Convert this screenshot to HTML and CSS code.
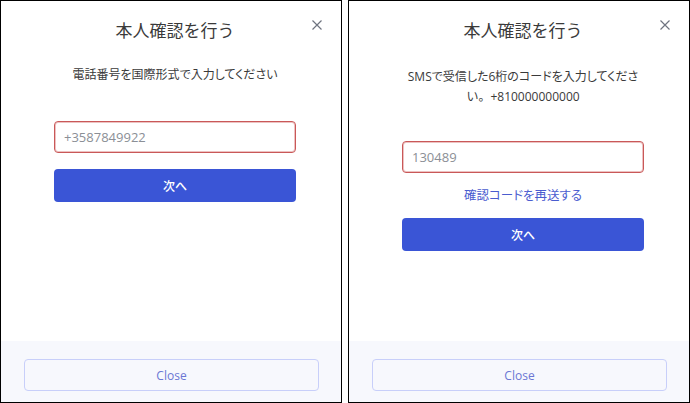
FILE: index.html
```html
<!DOCTYPE html>
<html lang="ja">
<head>
<meta charset="utf-8">
<title>本人確認を行う</title>
<link rel="stylesheet" href="styles.css">
</head>
<body>
<div class="page">
  <section class="panel">
    <div class="panel-body">
      <button class="x-btn" aria-label="close">
        <svg width="10" height="10" viewBox="0 0 10 10"><path d="M0.5 0.5L9.5 9.5M9.5 0.5L0.5 9.5" stroke="#6f7480" stroke-width="1.2" fill="none"/></svg>
      </button>
      <h1 class="title">本人確認を行う</h1>
      <p class="desc desc-one">電話番号を国際形式で入力してください</p>
      <div class="field">+3587849922</div>
      <button class="primary">次へ</button>
    </div>
    <div class="panel-footer">
      <button class="close-btn">Close</button>
    </div>
  </section>
  <section class="panel">
    <div class="panel-body">
      <button class="x-btn" aria-label="close">
        <svg width="10" height="10" viewBox="0 0 10 10"><path d="M0.5 0.5L9.5 9.5M9.5 0.5L0.5 9.5" stroke="#6f7480" stroke-width="1.2" fill="none"/></svg>
      </button>
      <h1 class="title">本人確認を行う</h1>
      <p class="desc desc-two">SMSで受信した6桁のコードを入力してくださ<br><span class="full">い。</span>+810000000000</p>
      <div class="field field-two">130489</div>
      <a class="resend">確認コードを再送する</a>
      <button class="primary primary-two">次へ</button>
    </div>
    <div class="panel-footer">
      <button class="close-btn">Close</button>
    </div>
  </section>
</div>
</body>
</html>
```
FILE: styles.css
```css
* { box-sizing: border-box; }
html, body { margin: 0; padding: 0; background: #fff; }
body {
  font-family: "Open Sans", "Noto Sans CJK JP", sans-serif;
  color: #333;
}
.page {
  display: flex;
  gap: 6px;
  width: 690px;
  height: 403px;
}
.panel {
  width: 342px;
  height: 403px;
  border: 1px solid #000;
  display: flex;
  flex-direction: column;
  background: #fff;
}
.panel-body {
  flex: 1;
  position: relative;
  display: flex;
  flex-direction: column;
  padding: 17px 45px 0 53px;
}
.x-btn {
  position: absolute;
  top: 18px;
  right: 18px;
  width: 12px;
  height: 12px;
  padding: 0;
  border: 0;
  background: none;
  display: flex;
  align-items: center;
  justify-content: center;
}
.title {
  margin: 0;
  font-family: "Noto Sans CJK JP", sans-serif;
  font-weight: 400;
  font-size: 17px;
  line-height: 24px;
  text-align: center;
  color: #3a3a3a;
}
.desc {
  margin: 23px -20px 0;
  font-family: "Open Sans", "Noto Sans CJK JP", sans-serif;
  font-feature-settings: "palt";
  font-size: 12px;
  line-height: 20px;
  text-align: center;
  color: #3a3a3a;
}
.desc .full { font-feature-settings: normal; }
.desc-two { margin-top: 25px; }
.field {
  margin-top: 36px;
  height: 32px;
  border: 1px solid #c95858;
  box-shadow: inset 0 0 0 1px rgba(215, 120, 120, 0.45);
  border-radius: 4px;
  padding: 0 9px;
  display: flex;
  align-items: center;
  font-size: 13px;
  color: #8b8f96;
}
.field-two { margin-top: 34px; }
.primary {
  margin-top: 16px;
  height: 33px;
  border: 0;
  border-radius: 4px;
  background: #3a55d6;
  color: #fff;
  font-family: "Noto Sans CJK JP", sans-serif;
  font-size: 12px;
  font-weight: 500;
}
.primary-two { margin-top: 13px; }
.resend {
  margin-top: 12px;
  font-family: "Noto Sans CJK JP", sans-serif;
  font-feature-settings: "palt";
  font-size: 12.5px;
  line-height: 20px;
  text-align: center;
  color: #4a5ccf;
}
.panel-footer {
  height: 61px;
  background: #f7f8fd;
  padding: 18px 22px 10px 23px;
}
.close-btn {
  width: 295px;
  height: 32px;
  border: 1px solid #c8cffa;
  border-radius: 4px;
  background: #f7f8fd;
  color: #6b77d4;
  font-family: "Open Sans", sans-serif;
  font-size: 12px;
}
```
